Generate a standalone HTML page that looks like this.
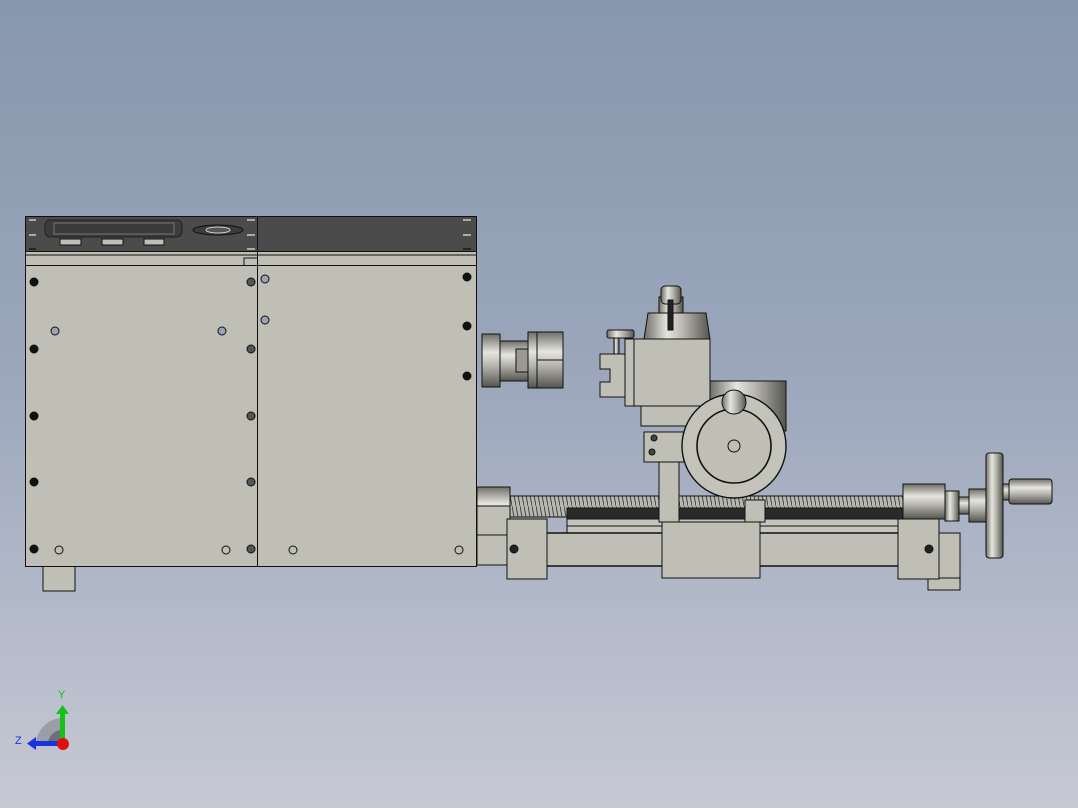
<!DOCTYPE html>
<html><head><meta charset="utf-8"><style>
html,body{margin:0;padding:0;width:1078px;height:808px;overflow:hidden}
body{background:linear-gradient(#8797ad 0%,#9ba6bb 45%,#c6c9d4 100%)}
svg{position:absolute;left:0;top:0}
</style></head><body>
<svg width="1078" height="808" viewBox="0 0 1078 808" xmlns="http://www.w3.org/2000/svg">
<defs>
<linearGradient id="cylV" x1="0" y1="0" x2="0" y2="1">
<stop offset="0" stop-color="#6f6f68"/><stop offset=".35" stop-color="#e6e6df"/><stop offset=".6" stop-color="#b5b5ad"/><stop offset="1" stop-color="#55554f"/></linearGradient>
<linearGradient id="cylH" x1="0" y1="0" x2="1" y2="0">
<stop offset="0" stop-color="#6f6f68"/><stop offset=".35" stop-color="#e6e6df"/><stop offset=".6" stop-color="#b5b5ad"/><stop offset="1" stop-color="#55554f"/></linearGradient>
<pattern id="thr" width="4" height="22" patternUnits="userSpaceOnUse">
<rect width="4" height="22" fill="#b8b8b0"/><path d="M0 0 L4 22" stroke="#444" stroke-width="1"/></pattern>
</defs>
<g stroke="#111" stroke-width="1" fill="#bfbfb6">
<!-- feet -->
<rect x="43" y="566" width="32" height="25"/>
<rect x="928" y="575" width="32" height="15"/>
<!-- main box -->
<rect x="25.5" y="216.5" width="451" height="350"/>
<rect x="25.5" y="216.5" width="451" height="35" fill="#4b4b4b"/>
<line x1="25" y1="255" x2="476" y2="255"/>
<line x1="25" y1="265.5" x2="476" y2="265.5"/>
<path d="M244 265 V258 H257" fill="none"/>
<line x1="257.5" y1="216" x2="257.5" y2="566"/>
<rect x="45" y="220" width="137" height="17" rx="5" fill="#3c3c3c" stroke="#222"/>
<rect x="54" y="223" width="120" height="11" fill="#3a3a3a" stroke="#777"/>
<rect x="60" y="239" width="21" height="6" fill="#bfbfb6"/>
<rect x="102" y="239" width="21" height="6" fill="#bfbfb6"/>
<rect x="144" y="239" width="20" height="6" fill="#bfbfb6"/>
<ellipse cx="218" cy="230" rx="25" ry="5" fill="#3c3c3c"/>
<ellipse cx="218" cy="230" rx="12" ry="3" fill="#555" stroke="#ccc"/>
<g stroke="#ddd" stroke-width="1.3">
<line x1="29" y1="220" x2="36" y2="220"/><line x1="29" y1="235" x2="36" y2="235"/><line x1="29" y1="249" x2="36" y2="249" stroke="#111"/>
<line x1="247" y1="220" x2="255" y2="220"/><line x1="247" y1="235" x2="255" y2="235"/><line x1="247" y1="249" x2="255" y2="249"/>
<line x1="463" y1="220" x2="471" y2="220"/><line x1="463" y1="235" x2="471" y2="235"/><line x1="463" y1="249" x2="471" y2="249" stroke="#111"/>
</g>
<!-- screws -->
<g fill="#111">
<circle cx="34" cy="282" r="4"/><circle cx="34" cy="349" r="4"/><circle cx="34" cy="416" r="4"/><circle cx="34" cy="482" r="4"/><circle cx="34" cy="549" r="4"/>
<circle cx="467" cy="277" r="4"/><circle cx="467" cy="326" r="4"/><circle cx="467" cy="376" r="4"/>
</g>
<g fill="#555">
<circle cx="251" cy="282" r="4"/><circle cx="251" cy="349" r="4"/><circle cx="251" cy="416" r="4"/><circle cx="251" cy="482" r="4"/><circle cx="251" cy="549" r="4"/>
</g>
<g fill="#9aa3b8">
<circle cx="55" cy="331" r="4"/><circle cx="222" cy="331" r="4"/><circle cx="265" cy="279" r="4"/><circle cx="265" cy="320" r="4"/>
</g>
<g fill="none">
<circle cx="59" cy="550" r="4"/><circle cx="226" cy="550" r="4"/><circle cx="293" cy="550" r="4"/><circle cx="459" cy="550" r="4"/>
</g>
<!-- chuck -->
<rect x="482" y="334" width="18" height="53" fill="url(#cylV)"/>
<rect x="500" y="341" width="28" height="40" fill="url(#cylV)"/>
<rect x="516" y="349" width="12" height="23" fill="#9a9a93"/>
<rect x="528" y="332" width="9" height="56" fill="url(#cylV)"/>
<rect x="537" y="332" width="26" height="56" fill="url(#cylV)"/>
<line x1="537" y1="360" x2="563" y2="360"/>
<!-- lead screw & rails -->
<rect x="510" y="496" width="393" height="21" fill="url(#thr)"/>
<rect x="567" y="508" width="336" height="11" fill="#2a2a2a"/>
<rect x="567" y="519" width="336" height="14" fill="#c5c5bd"/>
<line x1="567" y1="526" x2="903" y2="526"/>
<!-- left end -->
<rect x="477" y="487" width="33" height="48" fill="url(#cylV)"/>
<rect x="477" y="506" width="33" height="40" fill="#bfbfb6"/>
<rect x="477" y="535" width="30" height="30" fill="#bfbfb6"/>
<!-- bed bar -->
<rect x="525" y="533" width="397" height="33" fill="#bfbfb6" stroke-width="1.5"/>
<rect x="507" y="519" width="40" height="60"/>
<circle cx="514" cy="549" r="4" fill="#222"/>
<!-- right end -->
<rect x="939" y="533" width="21" height="45"/>
<rect x="903" y="484" width="42" height="35" fill="url(#cylV)"/>
<rect x="945" y="491" width="14" height="30" fill="url(#cylH)"/>
<rect x="898" y="519" width="41" height="60"/>
<circle cx="929" cy="549" r="4" fill="#222"/>
<!-- handwheel -->
<rect x="959" y="497" width="10" height="17" fill="url(#cylV)"/>
<rect x="969" y="489" width="17" height="33" fill="url(#cylV)"/>
<rect x="986" y="453" width="17" height="105" rx="3" fill="url(#cylH)"/>
<rect x="1003" y="484" width="6" height="16" fill="url(#cylV)"/>
<rect x="1009" y="479" width="43" height="25" rx="3" fill="url(#cylV)"/>
<!-- carriage -->
<rect x="659" y="460" width="20" height="62"/>
<rect x="662" y="522" width="98" height="56"/>
<rect x="745" y="500" width="20" height="22"/>
<rect x="710" y="381" width="76" height="50" fill="url(#cylH)"/>
<rect x="625" y="339" width="9" height="67"/>
<rect x="634" y="339" width="76" height="67"/>
<rect x="641" y="406" width="69" height="20"/>
<path d="M600 354 H625 V397 H600 V382 H610 V369 H600 Z"/>
<rect x="614" y="337" width="5" height="17" fill="url(#cylH)"/>
<rect x="607" y="330" width="27" height="8" rx="2" fill="url(#cylH)"/>
<path d="M644 339 L648 313 H706 L710 339 Z" fill="url(#cylH)"/>
<rect x="659" y="297" width="24" height="16" fill="url(#cylH)"/>
<rect x="661" y="286" width="20" height="18" rx="4" fill="url(#cylH)"/>
<rect x="668" y="300" width="5" height="30" fill="#222"/>
<rect x="644" y="432" width="40" height="30"/>
<circle cx="654" cy="438" r="3" fill="#444"/><circle cx="652" cy="452" r="3" fill="#444"/>
<circle cx="734" cy="446" r="52" fill="#c3c3ba" stroke-width="1.4"/>
<circle cx="734" cy="446" r="37" fill="#bfbfb6" stroke-width="1.6"/>
<circle cx="734" cy="446" r="6" fill="none"/>
<circle cx="734" cy="402" r="12" fill="url(#cylH)"/>
</g>
<!-- triad -->
<path d="M36 744 A27 27 0 0 1 62 718 V744 Z" fill="#9b9ea6"/>
<path d="M48 744 A14 14 0 0 1 62 730 V744 Z" fill="#6c6f77"/>
<rect x="60" y="712" width="5" height="32" fill="#18c018"/>
<path d="M56 714 L62.5 705 L69 714 Z" fill="#18c018"/>
<rect x="34" y="741" width="28" height="5" fill="#1a33e0"/>
<path d="M36 737 L27 743.5 L36 750 Z" fill="#1a33e0"/>
<circle cx="63" cy="744" r="6" fill="#e01010"/>
<text x="58" y="698" font-family="Liberation Sans, sans-serif" font-size="11" fill="#18c018">Y</text>
<text x="15" y="744" font-family="Liberation Sans, sans-serif" font-size="11" fill="#1a33e0">Z</text>
</svg>
</body></html>
